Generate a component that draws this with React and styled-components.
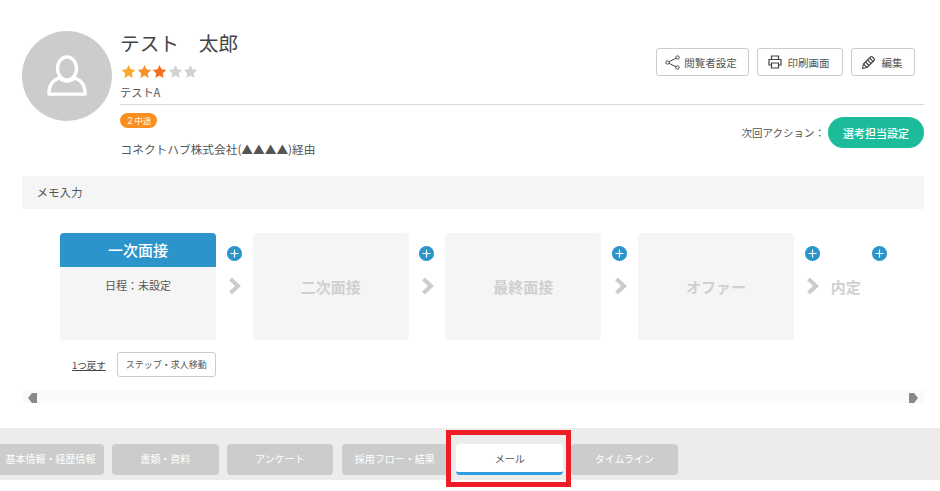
import React from 'react';
import styled, { createGlobalStyle } from 'styled-components';

const GlobalStyle = createGlobalStyle`
  html, body {
    margin: 0;
    padding: 0;
    background: #fff;
    overflow: hidden;
    font-family: "Noto Sans CJK JP", "Noto Sans", sans-serif;
    color: #555;
  }
  * { box-sizing: border-box; }
`;

const Page = styled.div`
  position: relative;
  width: 940px;
  height: 491px;
  overflow: hidden;
  padding-top: 31px;
`;

const Content = styled.div`
  padding: 0 16px 0 22px;
`;

const Header = styled.div`
  display: flex;
  gap: 8px;
  height: 145px;
`;

const Avatar = styled.div`
  width: 90px;
  height: 90px;
  border-radius: 50%;
  background: #ccc;
  display: flex;
  align-items: center;
  justify-content: center;
  flex: none;
`;

const Info = styled.div`
  flex: 1;
`;

const TopRow = styled.div`
  display: flex;
  justify-content: space-between;
  height: 74px;
  border-bottom: 1px solid #d9d9d9;
`;

const Name = styled.div`
  font-size: 19.7px;
  line-height: 24px;
  color: #444;
`;

const Stars = styled.div`
  display: flex;
  gap: 0.5px;
  margin: 9px 0 0 1px;
  height: 16px;
`;

const Company = styled.div`
  font-size: 11.2px;
  line-height: 16px;
  margin-top: 4px;
`;

const Actions = styled.div`
  display: flex;
  gap: 8px;
  padding: 17px 9px 0 0;
`;

const ActionButton = styled.button`
  height: 28px;
  width: ${p => p.$w}px;
  display: flex;
  align-items: center;
  justify-content: center;
  gap: ${p => p.$gap || 6}px;
  background: #fff;
  border: 1px solid #ccc;
  border-radius: 3px;
  padding: 0 3px 0 0;
  font-family: inherit;
  font-size: 10.5px;
  color: #555;
`;

const BottomRow = styled.div`
  display: flex;
  justify-content: space-between;
`;

const Badge = styled.span`
  display: inline-block;
  margin-top: 7px;
  width: 37px;
  height: 15px;
  border-radius: 8px;
  background: #f98f1f;
  color: #fff;
  font-size: 8.5px;
  line-height: 15px;
  text-align: center;
`;

const Via = styled.div`
  font-size: 11.7px;
  line-height: 16px;
  margin-top: 12px;
  padding-left: 0.5px;
`;

const NextAction = styled.div`
  display: flex;
  align-items: center;
  gap: 3px;
  height: 31px;
  margin-top: 12px;
  font-size: 10.5px;
`;

// the reference has its full-width colon centred in the cell
const Colon = styled.span`
  font-family: "Noto Sans CJK TC", sans-serif;
`;

const PillButton = styled.button`
  width: 96px;
  height: 31px;
  border: none;
  border-radius: 16px;
  background: #1cbc9b;
  color: #fff;
  font-family: inherit;
  font-size: 11px;
  font-weight: 500;
  padding: 0;
`;

const MemoBar = styled.div`
  height: 33px;
  background: #f5f5f5;
  font-size: 11.500px;
  line-height: 33px;
  padding-left: 14.500px;
`;

const Flow = styled.div`
  display: flex;
  margin: 24px 0 0 38px;
  height: 107px;
`;

const StepCard = styled.div`
  width: 156px;
  height: 107px;
  flex: none;
  background: #f5f5f5;
  border-radius: 4px;
  overflow: hidden;
  display: ${p => (p.$active ? 'block' : 'flex')};
  align-items: center;
  justify-content: center;
`;

const StepHead = styled.div`
  height: 34px;
  background: #2b94cb;
  color: #fff;
  font-size: 15px;
  font-weight: 500;
  line-height: 34px;
  text-align: center;
`;

const StepBody = styled.div`
  font-size: 11px;
  line-height: 16px;
  text-align: center;
  padding-top: 10px;
`;

const MutedLabel = styled.span`
  font-size: 15px;
  font-weight: 700;
  color: #d0d0d0;
`;

const Connector = styled.div`
  width: 36.67px;
  flex: none;
  display: flex;
  flex-direction: column;
  align-items: center;
  padding-top: 13px;
  gap: 16px;
  svg:last-child {
    margin-left: 2px;
  }
`;

const LastStep = styled.div`
  width: 56px;
  flex: none;
  display: flex;
  flex-direction: column;
  align-items: flex-end;
  padding-top: 13px;
`;

const LastLabel = styled(MutedLabel)`
  align-self: flex-start;
  line-height: 22px;
  margin-top: 15px;
`;

const Below = styled.div`
  display: flex;
  align-items: center;
  gap: 11px;
  margin: 12px 0 0 50px;
`;

const BackLink = styled.a`
  font-size: 9.5px;
  color: #444;
  text-decoration: underline;
`;

const MoveButton = styled.button`
  width: 99px;
  height: 25px;
  padding: 0;
  background: #fff;
  border: 1px solid #ccc;
  border-radius: 3px;
  font-family: inherit;
  font-size: 9px;
  color: #555;
`;

const Scroller = styled.div`
  display: flex;
  justify-content: space-between;
  align-items: flex-end;
  height: 13px;
  margin-top: 13px;
  padding: 0 6px;
  background: #fafafa;
`;

const TabBar = styled.div`
  display: flex;
  gap: 8.3px;
  height: 52px;
  margin-top: 25px;
  padding: 16px 0 0 0;
  margin-left: -2.8px;
  background: #ececec;
  width: 943px;
`;

const Tab = styled.div`
  position: relative;
  width: 106.5px;
  height: 31px;
  flex: none;
  border-radius: 4px;
  background: ${p => (p.$active ? '#fff' : '#ccc')};
  color: ${p => (p.$active ? '#555' : '#fff')};
  font-size: 10px;
  line-height: 30px;
  text-align: center;
  overflow: hidden;
  ${p => p.$active && 'border-bottom: 3px solid #2f9be0;'}
`;

const Highlight = styled.div`
  position: absolute;
  left: 446px;
  top: 430px;
  width: 125px;
  height: 57px;
  border: 5px solid #ee1c25;
  pointer-events: none;
`;

const Star = ({ color }) => (
  <svg width="15" height="15" viewBox="0 0 24 24">
    <path fill={color} d="M12 1.5l3.2 7 7.6.9-5.6 5.2 1.5 7.6L12 18.4l-6.7 3.8 1.500-7.600L1.200 9.400l7.600-.9z" />
  </svg>
);

const PersonIcon = () => (
  <svg width="40" height="42" viewBox="0 0 42 44" fill="none" stroke="#fff" strokeWidth="3.500" strokeLinejoin="round">
    <ellipse cx="21" cy="14" rx="10" ry="12" />
    <path d="M13 24c-6 2-11 7-11 17h38c0-10-5-15-11-17-2 2-5 3.500-8 3.500s-6-1.500-8-3.500z" />
  </svg>
);

const ShareIcon = () => (
  <svg width="15" height="15" viewBox="0 0 15 15" fill="none" stroke="#444" strokeWidth="1">
    <circle cx="12.500" cy="2.500" r="1.700" />
    <circle cx="2.500" cy="7.500" r="1.700" />
    <circle cx="12.500" cy="12.500" r="1.700" />
    <path d="M4 6.700l7-3.500M4 8.300l7 3.500" />
  </svg>
);

const PrintIcon = () => (
  <svg width="14" height="14" viewBox="0 0 14 14" fill="none" stroke="#444" strokeWidth="1.200">
    <path d="M3.500 4.500V1h7v3.500" />
    <path d="M3.500 10H1V4.500h12V10h-2.500" />
    <path d="M3.500 8h7v5h-7z" />
  </svg>
);

const PencilIcon = () => (
  <svg width="15" height="15" viewBox="0 0 15 15" fill="none" stroke="#444" strokeWidth="1.100" strokeLinejoin="round">
    <path d="M1.500 13.500l1-4.500 7-7c.6-.6 1.400-.6 2 0l1.500 1.500c.6.6.6 1.400 0 2l-7 7z" />
    <path d="M2.500 9l3.500 3.500M4.500 7l3.500 3.500M6.500 5l3.500 3.500M8.500 3l3.500 3.500" />
  </svg>
);

const PlusIcon = () => (
  <svg width="15" height="15" viewBox="0 0 15 15">
    <circle cx="7.500" cy="7.500" r="7.500" fill="#2b94cb" />
    <path d="M7.500 3.500v8M3.500 7.500h8" stroke="#fff" strokeWidth="1.200" />
  </svg>
);

const ChevronIcon = () => (
  <svg width="14" height="18" viewBox="0 0 14 18" fill="none" stroke="#ccc" strokeWidth="4">
    <path d="M2.500 2l7.500 7-7.500 7" />
  </svg>
);

const ScrollArrow = ({ dir }) => (
  <svg width="9" height="10" viewBox="0 0 9 10">
    <path fill="#888" d={dir === 'left' ? 'M9 0v10H4L0 5l4-5z' : 'M0 0v10h5l4-5-4-5z'} />
  </svg>
);

const stages = ['二次面接', '最終面接', 'オファー'];
const tabs = ['基本情報・経歴情報', '書類・資料', 'アンケート', '採用フロー・結果', 'メール', 'タイムライン'];
const starColors = ['#f9a826', '#f7922a', '#f26d24', '#d2d2d2', '#d2d2d2'];

const Connect = () => (
  <Connector>
    <PlusIcon />
    <ChevronIcon />
  </Connector>
);

export default function App() {
  return (
    <Page>
      <GlobalStyle />
      <Content>
        <Header>
          <Avatar><PersonIcon /></Avatar>
          <Info>
            <TopRow>
              <div>
                <Name>テスト　太郎</Name>
                <Stars>
                  {starColors.map((c, i) => <Star key={i} color={c} />)}
                </Stars>
                <Company>テストA</Company>
              </div>
              <Actions>
                <ActionButton $w={93} $gap={4}><ShareIcon />閲覧者設定</ActionButton>
                <ActionButton $w={86}><PrintIcon />印刷画面</ActionButton>
                <ActionButton $w={64}><PencilIcon />編集</ActionButton>
              </Actions>
            </TopRow>
            <BottomRow>
              <div>
                <Badge>２中途</Badge>
                <Via>コネクトハブ株式会社(▲▲▲▲)経由</Via>
              </div>
              <NextAction>
                <span>次回アクション<Colon>：</Colon></span>
                <PillButton>選考担当設定</PillButton>
              </NextAction>
            </BottomRow>
          </Info>
        </Header>
        <MemoBar>メモ入力</MemoBar>
        <Flow>
          <StepCard $active>
            <StepHead>一次面接</StepHead>
            <StepBody>日程<Colon>：</Colon>未設定</StepBody>
          </StepCard>
          {stages.map(s => (
            <React.Fragment key={s}>
              <Connect />
              <StepCard><MutedLabel>{s}</MutedLabel></StepCard>
            </React.Fragment>
          ))}
          <Connect />
          <LastStep>
            <PlusIcon />
            <LastLabel>内定</LastLabel>
          </LastStep>
        </Flow>
        <Below>
          <BackLink>1つ戻す</BackLink>
          <MoveButton>ステップ・求人移動</MoveButton>
        </Below>
        <Scroller>
          <ScrollArrow dir="left" />
          <ScrollArrow dir="right" />
        </Scroller>
      </Content>
      <TabBar>
        {tabs.map(t => <Tab key={t} $active={t === 'メール'}>{t}</Tab>)}
      </TabBar>
      <Highlight />
    </Page>
  );
}
